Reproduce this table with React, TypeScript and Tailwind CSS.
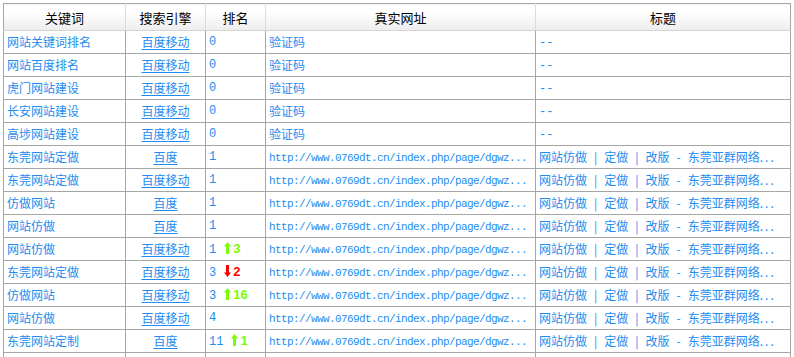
type Trend = { dir: "up" | "down"; n: number }

interface RankRow {
  keyword: string
  engine: string
  rank: number
  trend?: Trend
  verified: boolean
}

const rows: RankRow[] = [
  { keyword: "网站关键词排名", engine: "百度移动", rank: 0, verified: false },
  { keyword: "网站百度排名", engine: "百度移动", rank: 0, verified: false },
  { keyword: "虎门网站建设", engine: "百度移动", rank: 0, verified: false },
  { keyword: "长安网站建设", engine: "百度移动", rank: 0, verified: false },
  { keyword: "高埗网站建设", engine: "百度移动", rank: 0, verified: false },
  { keyword: "东莞网站定做", engine: "百度", rank: 1, verified: true },
  { keyword: "东莞网站定做", engine: "百度移动", rank: 1, verified: true },
  { keyword: "仿做网站", engine: "百度", rank: 1, verified: true },
  { keyword: "网站仿做", engine: "百度", rank: 1, verified: true },
  { keyword: "网站仿做", engine: "百度移动", rank: 1, trend: { dir: "up", n: 3 }, verified: true },
  { keyword: "东莞网站定做", engine: "百度移动", rank: 3, trend: { dir: "down", n: 2 }, verified: true },
  { keyword: "仿做网站", engine: "百度移动", rank: 3, trend: { dir: "up", n: 16 }, verified: true },
  { keyword: "网站仿做", engine: "百度移动", rank: 4, verified: true },
  { keyword: "东莞网站定制", engine: "百度", rank: 11, trend: { dir: "up", n: 1 }, verified: true },
]

function Arrow({ dir }: { dir: "up" | "down" }) {
  const color = dir === "up" ? "#7cfc00" : "#ff0000"
  return (
    <svg width="7" height="12" viewBox="0 0 7 12" className="inline-block align-[-1px]">
      {dir === "up" ? (
        <>
          <polygon points="3.5,0 7,4.5 0,4.5" fill={color} />
          <rect x="2" y="4" width="3" height="8" fill={color} />
        </>
      ) : (
        <>
          <rect x="2" y="0" width="3" height="8" fill={color} />
          <polygon points="0,7.5 7,7.5 3.5,12" fill={color} />
        </>
      )}
    </svg>
  )
}

const th =
  "h-[27px] border border-[#a6a6a6] border-b-[#d4d4d4] border-x-[#dcdcdc] bg-gradient-to-b from-white from-30% to-[#ededed] text-[13px] font-normal text-black text-center"
const td = "h-[23px] border border-[#a6a6a6] px-[3px] py-0 text-[12px] text-[#1e8cf0] whitespace-nowrap overflow-hidden"

export default function App() {
  return (
    <div className="bg-white min-h-screen pt-[3px] pl-[3px] font-['Noto_Sans_CJK_SC','Noto_Sans',sans-serif] leading-none">
      <table className="table-fixed border-collapse border border-[#a6a6a6] w-[787px]">
        <colgroup>
          <col className="w-[122px]" />
          <col className="w-[80px]" />
          <col className="w-[60px]" />
          <col className="w-[270px]" />
          <col className="w-[255px]" />
        </colgroup>
        <thead>
          <tr>
            <th className={th + " border-l-[#a6a6a6]"}>关键词</th>
            <th className={th}>搜索引擎</th>
            <th className={th}>排名</th>
            <th className={th}>真实网址</th>
            <th className={th + " border-r-[#a6a6a6]"}>标题</th>
          </tr>
        </thead>
        <tbody>
          {rows.map((r, i) => (
            <tr key={i}>
              <td className={td}>
                <a href="#">{r.keyword}</a>
              </td>
              <td className={td + " text-center"}>
                <a href="#" className="underline underline-offset-2">
                  {r.engine}
                </a>
              </td>
              <td className={td + " font-['Liberation_Mono',monospace] text-[11px]"}>
                <span>{r.rank}</span>
                {r.trend && (
                  <span className="ml-[8px] font-bold font-['Liberation_Sans',sans-serif] text-[13px]">
                    <Arrow dir={r.trend.dir} />
                    <span className={"ml-[2px] " + (r.trend.dir === "up" ? "text-[#7cfc00]" : "text-[#ff0000]")}>
                      {r.trend.n}
                    </span>
                  </span>
                )}
              </td>
              <td className={td}>
                {r.verified ? (
                  <a href="#" className="font-['Liberation_Mono',monospace] text-[11px] tracking-[-0.6px]">
                    http://www.0769dt.cn/index.php/page/dgwz...
                  </a>
                ) : (
                  <a href="#">验证码</a>
                )}
              </td>
              <td className={td}>
                {r.verified ? (
                  <span>
                    网站仿做<span className="mx-[7px]">|</span>定做<span className="mx-[7px]">|</span>改版
                    <span className="mx-[7px]">-</span>东莞亚群网络<span className="tracking-[2px]">...</span>
                  </span>
                ) : (
                  <span className="font-['Liberation_Mono',monospace]">--</span>
                )}
              </td>
            </tr>
          ))}
          <tr>
            <td className={td} />
            <td className={td} />
            <td className={td} />
            <td className={td} />
            <td className={td} />
          </tr>
        </tbody>
      </table>
    </div>
  )
}
